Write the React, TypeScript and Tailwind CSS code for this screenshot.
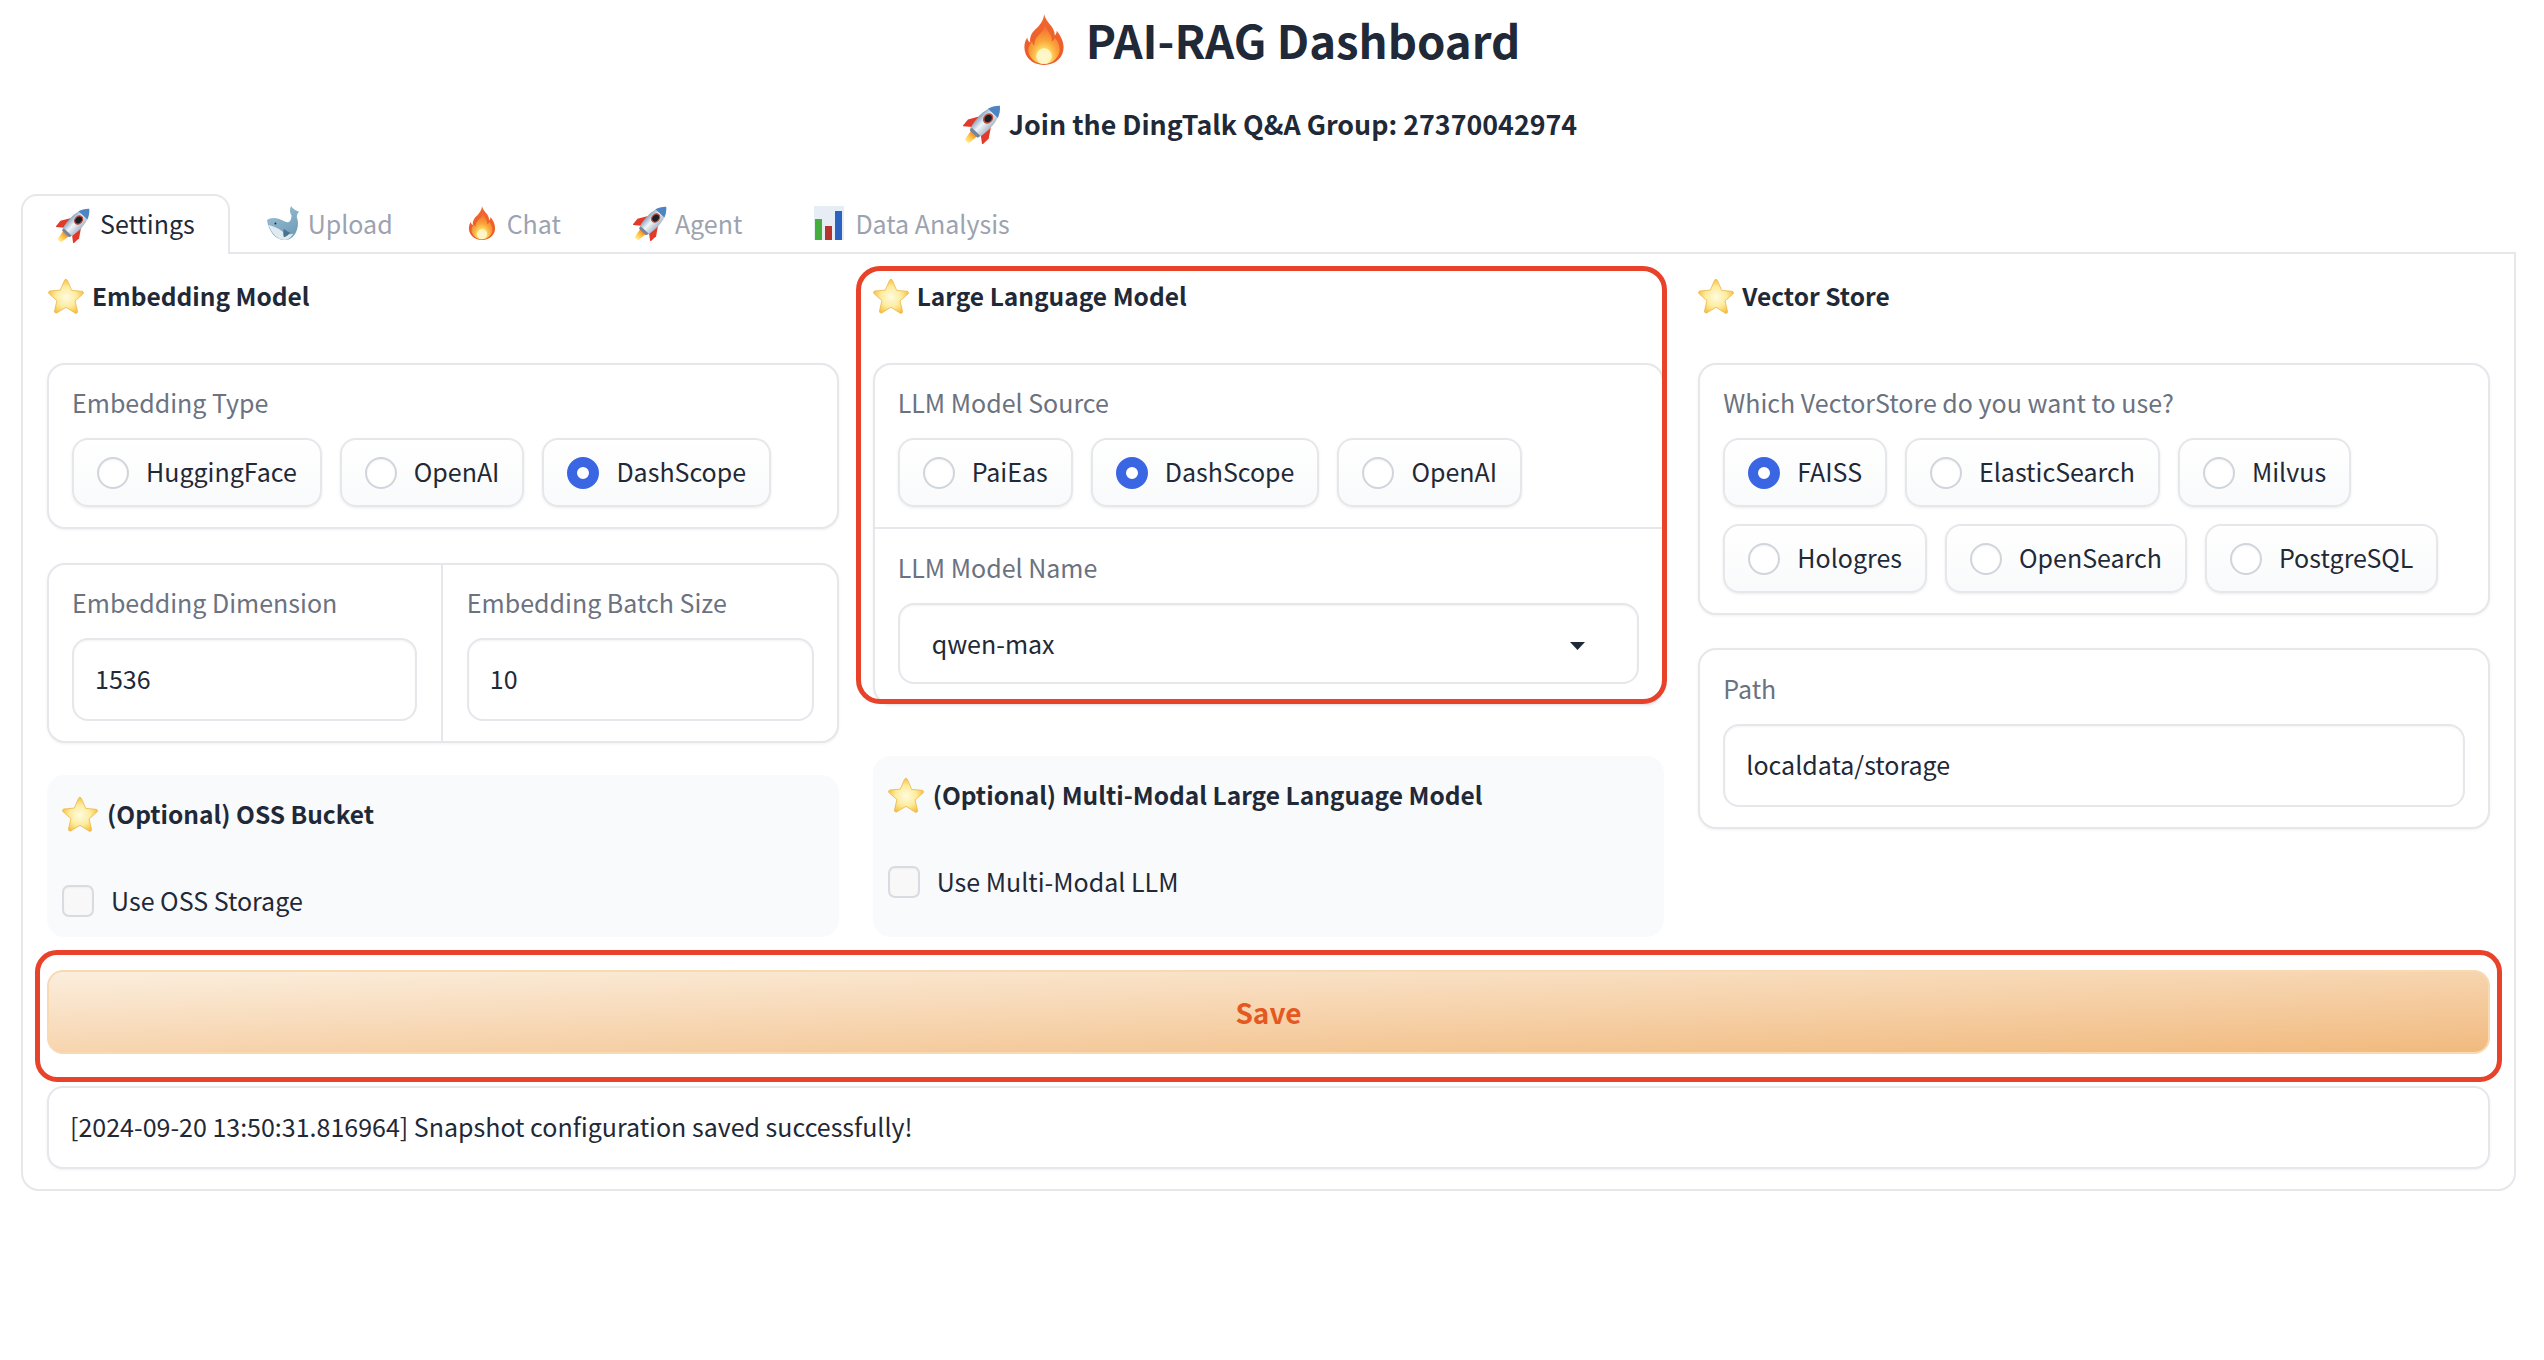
import React from "react";

function Star({ className = "" }: { className?: string }) {
  return (
    <svg viewBox="0 0 36 36" className={`w-[36px] h-[36px] shrink-0 ${className}`}>
      <defs>
        <radialGradient id="starFill" cx="50%" cy="52%" r="55%">
          <stop offset="0%" stopColor="#fffbe2" />
          <stop offset="55%" stopColor="#fdec9c" />
          <stop offset="100%" stopColor="#f6bb35" />
        </radialGradient>
      </defs>
      <path
        d="M18 1.500c.7 0 1.200.5 1.500 1.200l4.200 9.700 10.300.9c1.400.1 1.900 1.800.9 2.700l-7.800 6.900 2.400 10.500c.3 1.400-1.200 2.400-2.400 1.700L18 29.300l-9.100 5.500c-1.200.7-2.700-.3-2.400-1.700l2.400-10.500-7.800-6.900c-1-.9-.5-2.600.9-2.700l10.300-.9 4.200-9.700c.3-.7.8-1.200 1.500-1.200z"
        fill="url(#starFill)"
        stroke="#eeb44a"
        strokeWidth="0.8"
      />
    </svg>
  );
}

function Fire({ className = "" }: { className?: string }) {
  return (
    <svg viewBox="0 0 40 52" className={`shrink-0 ${className}`}>
      <defs>
        <linearGradient id="fireOuter" x1="0" y1="0" x2="0" y2="1">
          <stop offset="0%" stopColor="#f0672f" />
          <stop offset="100%" stopColor="#ea5a2a" />
        </linearGradient>
        <radialGradient id="fireInner" cx="50%" cy="82%" r="72%">
          <stop offset="0%" stopColor="#fffbe0" />
          <stop offset="25%" stopColor="#ffe36a" />
          <stop offset="60%" stopColor="#fba33a" />
          <stop offset="100%" stopColor="#f4762f" />
        </radialGradient>
      </defs>
      <path
        d="M20 0c1 5 4 8 8 13 2 3 3 6 3 9 1-1 2-3 2-5 4 5 7 11 7 17 0 10-8 18-20 18S0 44 0 34c0-4 1-7 3-10 0 2 1 4 3 5-1-6 2-11 7-15 4-4 7-9 7-14z"
        fill="url(#fireOuter)"
      />
      <path
        d="M21 11c1 4 4 7 6 11 1 2 1 4 1 6 2-1 3-3 3-4 3 4 5 7 5 12 0 8-7 15-16 15S4 44 4 37c0-4 2-7 4-9 0 2 1 3 2 4 0-5 2-8 5-11 3-3 6-6 6-10z"
        fill="url(#fireInner)"
      />
      <ellipse cx="20" cy="43" rx="8" ry="8" fill="#fff8cf" opacity="0.85" />
    </svg>
  );
}

function Rocket({ className = "" }: { className?: string }) {
  return (
    <svg viewBox="0 0 36 36" className={`shrink-0 ${className}`}>
      <defs>
        <linearGradient id="rocketBody" x1="0" y1="0" x2="1" y2="0">
          <stop offset="0%" stopColor="#8aa4be" />
          <stop offset="45%" stopColor="#f1f5f9" />
          <stop offset="100%" stopColor="#a9b8c8" />
        </linearGradient>
        <linearGradient id="rocketFlame" x1="0" y1="0" x2="0" y2="1">
          <stop offset="0%" stopColor="#f36b2b" />
          <stop offset="55%" stopColor="#ffc63f" />
          <stop offset="100%" stopColor="#fff0a0" />
        </linearGradient>
      </defs>
      <g transform="translate(18 18) rotate(43) scale(0.98 1.24) translate(-18 -18)">
        <path d="M14 26h8l-1.600 9.500h-4.800z" fill="url(#rocketFlame)" />
        <path d="M11 15.500L5 23l.5 6.500 7-4.500z" fill="#e23a2a" />
        <path d="M25 15.500L31 23l-.5 6.500-7-4.500z" fill="#e23a2a" />
        <path d="M18 0c5.500 4 8 10 7.500 18-.3 4-1 7-2 9.500h-11c-1-2.500-1.700-5.500-2-9.500C10 10 12.500 4 18 0z" fill="url(#rocketBody)" />
        <path d="M18 0c2.900 2 5 4.700 6.200 7.400H11.800C13 4.700 15.100 2 18 0z" fill="#4f84c4" />
        <circle cx="18" cy="12.500" r="3.600" fill="#1d1f26" stroke="#b9503f" strokeWidth="1.200" />
        <path d="M12.500 25.500h11l-.7 2.500h-9.600z" fill="#74869a" />
      </g>
    </svg>
  );
}

function Whale({ className = "" }: { className?: string }) {
  return (
    <svg viewBox="0 0 36 36" className={`shrink-0 ${className}`}>
      <defs>
        <linearGradient id="whaleBody" x1="0" y1="0" x2="0.6" y2="1">
          <stop offset="0%" stopColor="#a2c6da" />
          <stop offset="100%" stopColor="#6f9cb6" />
        </linearGradient>
      </defs>
      <path
        d="M1 15C5 11 14 12.500 20 16.500c4 2.500 7-1 7-6.500-2-3-2.300-6-.5-10C28.500 3 31.500 5 35 6c-2 2-3 4-2 7 3 9-2 23-13 23C10 36 3 27 1 15z"
        fill="url(#whaleBody)"
      />
      <path d="M2.500 20c5 1 11 3.500 15 7 3.500 3 8 3.500 11.500 2.500-2.500 4-5.500 6.500-9 6.500-7.500 0-14-7-17.500-16z" fill="#dfeaf1" />
      <path d="M19 24c-1 3-1 6 0 9 3-1 5-2.500 6.500-5-2.500-1-4.500-2-6.500-4z" fill="#4a748e" />
      <circle cx="10" cy="18.500" r="1" fill="#1c2b36" />
    </svg>
  );
}

function Chart({ className = "" }: { className?: string }) {
  return (
    <svg viewBox="0 0 30 34" className={`shrink-0 ${className}`}>
      <rect x="0" y="0" width="30" height="34" fill="#e7edf4" />
      <rect x="1" y="13" width="7" height="21" fill="#43ad3e" />
      <rect x="11" y="20" width="7" height="14" fill="#b5342c" />
      <rect x="21" y="5" width="7" height="29" fill="#2c62c0" />
    </svg>
  );
}

function ActiveTab({ icon, label }: { icon: React.ReactNode; label: string }) {
  return (
    <div className="relative z-10 flex items-center h-[60px] -mb-[2px] pl-[33px] pr-[33px] gap-[8px] border-2 border-b-0 border-[#e5e7eb] rounded-t-[16px] bg-white text-[#1f2937]">
      {icon}
      <span className="pb-[4px]">{label}</span>
    </div>
  );
}

function Tab({ icon, label, className }: { icon: React.ReactNode; label: string; className: string }) {
  return (
    <div className={`flex items-center h-[58px] pl-[36px] text-[#9ca3af] ${className}`}>
      {icon}
      <span>{label}</span>
    </div>
  );
}

function Heading({ children, className = "" }: { children: React.ReactNode; className?: string }) {
  return (
    <div className={`flex items-center h-[36px] gap-[8px] font-semibold text-[24.500px] text-[#1f2937] ${className}`}>
      <Star />
      <span>{children}</span>
    </div>
  );
}

function Radio({ label, checked }: { label: string; checked?: boolean }) {
  return (
    <div className="flex items-center h-[69px] px-[23px] gap-[17px] border-2 border-[#e5e7eb] rounded-[16px] bg-gradient-to-b from-white to-[#f9fafb] shadow-[0_1px_3px_rgba(0,0,0,0.08)] text-[#1f2937]">
      {checked ? (
        <span className="block w-[32px] h-[32px] rounded-full border-[10px] border-[#3b66e3] bg-white shrink-0" />
      ) : (
        <span className="block w-[32px] h-[32px] rounded-full border-2 border-[#d1d5db] bg-white shrink-0 shadow-[inset_0_1px_2px_rgba(0,0,0,0.05)]" />
      )}
      <span className="pb-[3px]">{label}</span>
    </div>
  );
}

function Label({ children }: { children: React.ReactNode }) {
  return <div className="h-[28px] leading-[28px] mb-[22px] text-[#6b7280]">{children}</div>;
}

function Input({ value }: { value: string }) {
  return (
    <div className="flex items-center h-[83px] px-[21px] pb-[3px] border-2 border-[#e5e7eb] rounded-[16px] bg-white shadow-[inset_0_1px_2px_rgba(0,0,0,0.05)] text-[#1f2937]">
      {value}
    </div>
  );
}

function Block({ children, className = "" }: { children: React.ReactNode; className?: string }) {
  return (
    <div className={`border-2 border-[#e5e7eb] rounded-[18px] bg-white shadow-[0_1px_3px_rgba(0,0,0,0.06)] ${className}`}>
      {children}
    </div>
  );
}

function CheckPanel({ title, label, className = "" }: { title: string; label: string; className?: string }) {
  return (
    <div className={`flex flex-col flex-1 rounded-[18px] bg-[#f9fafb] pt-[21px] pl-[15px] ${className}`}>
      <Heading className="gap-[9px]">{title}</Heading>
      <div className="flex items-center mt-[51px] h-[36px] gap-[17px] text-[#1f2937]">
        <span className="block w-[32px] h-[32px] rounded-[7px] border-2 border-[#d9dbe0] bg-[#f8f8f9] shadow-[inset_0_1px_2px_rgba(0,0,0,0.04)] shrink-0" />
        <span className="pb-[2px]">{label}</span>
      </div>
    </div>
  );
}

export default function App() {
  return (
    <div className="w-full h-[1360px] bg-white overflow-hidden font-['Noto_Sans_CJK_SC','Liberation_Sans',sans-serif] text-[25px] leading-[36px]">
      <header className="h-[194px] flex flex-col items-center text-[#1f2937] font-semibold">
        <div className="flex items-center gap-[22px] h-[68px] pt-[10px] text-[45.500px]">
          <Fire className="w-[40px] h-[51px]" />
          <h1 className="leading-[60px]">PAI-RAG Dashboard</h1>
        </div>
        <div className="flex items-center gap-[6px] mt-[36px] pr-[4px] h-[40px] text-[26.800px]">
          <Rocket className="w-[40px] h-[40px]" />
          <span>Join the DingTalk Q&amp;A Group: 27370042974</span>
        </div>
      </header>

      <div className="ml-[21px] mr-[28px]">
        <nav className="flex h-[58px]">
          <ActiveTab icon={<Rocket className="w-[36px] h-[36px]" />} label="Settings" />
          <Tab className="gap-[8px] pr-[39px]" icon={<Whale className="w-[34px] h-[34px]" />} label="Upload" />
          <Tab className="gap-[11px] pr-[36px]" icon={<Fire className="w-[28px] h-[34px]" />} label="Chat" />
          <Tab className="gap-[6px] pr-[36px]" icon={<Rocket className="w-[36px] h-[36px]" />} label="Agent" />
          <Tab className="gap-[11px] pr-[36px]" icon={<Chart className="w-[30px] h-[34px]" />} label="Data Analysis" />
        </nav>

        <main className="border-2 border-[#e5e7eb] rounded-b-[18px] pt-[24px] pl-[24px] pr-[24px] pb-[20px] bg-white">
          <div className="grid grid-cols-3 gap-x-[34px]">
            <section className="flex flex-col">
              <Heading className="pl-px">Embedding Model</Heading>
              <Block className="mt-[49px] pt-[23px] pb-[20px] px-[23px]">
                <Label>Embedding Type</Label>
                <div className="flex flex-wrap gap-x-[18px] gap-y-[17px]">
                  <Radio label="HuggingFace" />
                  <Radio label="OpenAI" />
                  <Radio label="DashScope" checked />
                </div>
              </Block>
              <Block className="mt-[34px] grid grid-cols-2">
                <div className="pt-[23px] pb-[20px] pl-[23px] pr-[24px] border-r-2 border-[#e5e7eb]">
                  <Label>Embedding Dimension</Label>
                  <Input value="1536" />
                </div>
                <div className="pt-[23px] pb-[20px] pl-[24px] pr-[23px]">
                  <Label>Embedding Batch Size</Label>
                  <Input value="10" />
                </div>
              </Block>
              <CheckPanel className="mt-[32px]" title="(Optional) OSS Bucket" label="Use OSS Storage" />
            </section>

            <section className="relative flex flex-col">
              <Heading>Large Language Model</Heading>
              <Block className="mt-[49px]">
                <div className="pt-[23px] pb-[20px] px-[23px] border-b-2 border-[#e5e7eb]">
                  <Label>LLM Model Source</Label>
                  <div className="flex flex-wrap gap-x-[18px] gap-y-[17px]">
                    <Radio label="PaiEas" />
                    <Radio label="DashScope" checked />
                    <Radio label="OpenAI" />
                  </div>
                </div>
                <div className="pt-[24px] pb-[19px] px-[23px]">
                  <Label>LLM Model Name</Label>
                  <div className="flex items-center justify-between h-[81px] pl-[32px] pr-[52px] border-2 border-[#e5e7eb] rounded-[16px] bg-white shadow-[inset_0_1px_2px_rgba(0,0,0,0.05)] text-[#1f2937]">
                    <span className="pb-[2px]">qwen-max</span>
                    <svg viewBox="0 0 15 8" className="w-[15px] h-[8px] mt-[5px]">
                      <path d="M0 0h15L7.500 8z" fill="#1f2937" />
                    </svg>
                  </div>
                </div>
              </Block>
              <CheckPanel className="mt-[51px] pb-[37px]" title="(Optional) Multi-Modal Large Language Model" label="Use Multi-Modal LLM" />
              <div className="absolute -top-[12px] -left-[17px] -right-[3px] h-[438px] border-[5px] border-[#e8432a] rounded-[24px] pointer-events-none" />
            </section>

            <section className="flex flex-col">
              <Heading>Vector Store</Heading>
              <Block className="mt-[49px] pt-[23px] pb-[20px] px-[23px]">
                <Label>Which VectorStore do you want to use?</Label>
                <div className="flex flex-wrap gap-x-[18px] gap-y-[17px]">
                  <Radio label="FAISS" checked />
                  <Radio label="ElasticSearch" />
                  <Radio label="Milvus" />
                  <Radio label="Hologres" />
                  <Radio label="OpenSearch" />
                  <Radio label="PostgreSQL" />
                </div>
              </Block>
              <Block className="mt-[33px] pt-[24px] pb-[20px] px-[23px]">
                <Label>Path</Label>
                <Input value="localdata/storage" />
              </Block>
            </section>
          </div>

          <div className="relative mt-[33px]">
            <button className="block w-full h-[84px] rounded-[16px] border-2 border-[#f7d9b2] bg-gradient-to-br from-[#fbeedd] to-[#f1ba7e] text-[#e4591f] font-semibold text-[28px]">
              Save
            </button>
            <div className="absolute -top-[20px] -left-[12px] -right-[12px] -bottom-[28px] border-[5px] border-[#e8432a] rounded-[22px] pointer-events-none" />
          </div>

          <div className="flex items-center h-[83px] mt-[32px] px-[21px] pb-[3px] border-2 border-[#e5e7eb] rounded-[16px] bg-white shadow-[0_1px_3px_rgba(0,0,0,0.06)] text-[#1f2937]">
            [2024-09-20 13:50:31.816964] Snapshot configuration saved successfully!
          </div>
        </main>
      </div>
    </div>
  );
}
